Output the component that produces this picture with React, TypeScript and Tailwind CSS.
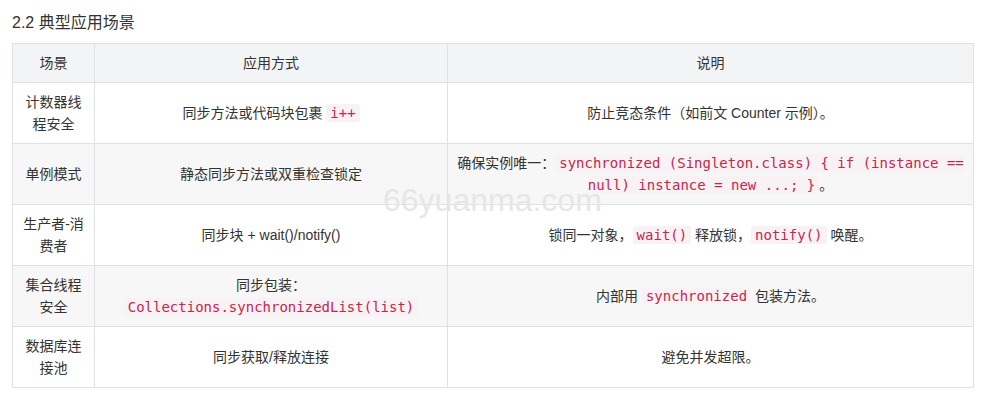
const rows: { name: string; way: React.ReactNode; desc: React.ReactNode }[] = [
  {
    name: "计数器线程安全",
    way: (
      <>
        同步方法或代码块包裹 <Code>i++</Code>
      </>
    ),
    desc: "防止竞态条件（如前文 Counter 示例）。",
  },
  {
    name: "单例模式",
    way: "静态同步方法或双重检查锁定",
    desc: (
      <>
        确保实例唯一：<Code>synchronized (Singleton.class) {"{"} if (instance == null) instance = new ...; {"}"}</Code>。
      </>
    ),
  },
  {
    name: "生产者-消费者",
    way: "同步块 + wait()/notify()",
    desc: (
      <>
        锁同一对象，<Code>wait()</Code> 释放锁，<Code>notify()</Code> 唤醒。
      </>
    ),
  },
  {
    name: "集合线程安全",
    way: (
      <>
        同步包装：<Code>Collections.synchronizedList(list)</Code>
      </>
    ),
    desc: (
      <>
        内部用 <Code>synchronized</Code> 包装方法。
      </>
    ),
  },
  {
    name: "数据库连接池",
    way: "同步获取/释放连接",
    desc: "避免并发超限。",
  },
];

function Code({ children }: { children: React.ReactNode }) {
  return (
    <code className="rounded-[3px] bg-[#f9f2f4] px-[4px] py-[1px] font-['DejaVu_Sans_Mono',monospace] text-[14px] text-[#c7254e]">
      {children}
    </code>
  );
}

export default function App() {
  return (
    <div className="relative min-h-[407px] w-[988px] bg-white font-['Helvetica_Neue','Liberation_Sans','Noto_Sans_CJK_SC',sans-serif] text-[14px] text-[#333]">
      <div className="px-3 pt-[11px]">
        <h2 className="h-[32px] text-[16px] leading-[24px] text-[#333]">2.2 典型应用场景</h2>
        <table className="w-[962px] table-fixed border-collapse leading-[22px]">
          <colgroup>
            <col className="w-[82px]" />
            <col className="w-[353px]" />
            <col />
          </colgroup>
          <thead>
            <tr className="bg-[#f3f4f5]">
              <th className="border border-[#dfe2e5] px-[7px] py-2 font-normal">场景</th>
              <th className="border border-[#dfe2e5] px-[7px] py-2 font-normal">应用方式</th>
              <th className="border border-[#dfe2e5] px-[7px] py-2 font-normal">说明</th>
            </tr>
          </thead>
          <tbody>
            {rows.map((r, i) => (
              <tr key={r.name} className={i % 2 === 1 ? "bg-[#f7f7f7]" : "bg-white"}>
                <td className="h-[61px] border border-[#dfe2e5] px-[7px] py-2 text-center">{r.name}</td>
                <td className="border border-[#dfe2e5] px-[7px] py-2 text-center">{r.way}</td>
                <td className="border border-[#dfe2e5] px-[7px] py-2 text-center">{r.desc}</td>
              </tr>
            ))}
          </tbody>
        </table>
      </div>
      <div className="pointer-events-none absolute left-[383px] top-[182px] font-['Liberation_Sans',sans-serif] text-[32px] leading-[36px] text-[#e6e6e6]">
        66yuanma.com
      </div>
    </div>
  );
}
